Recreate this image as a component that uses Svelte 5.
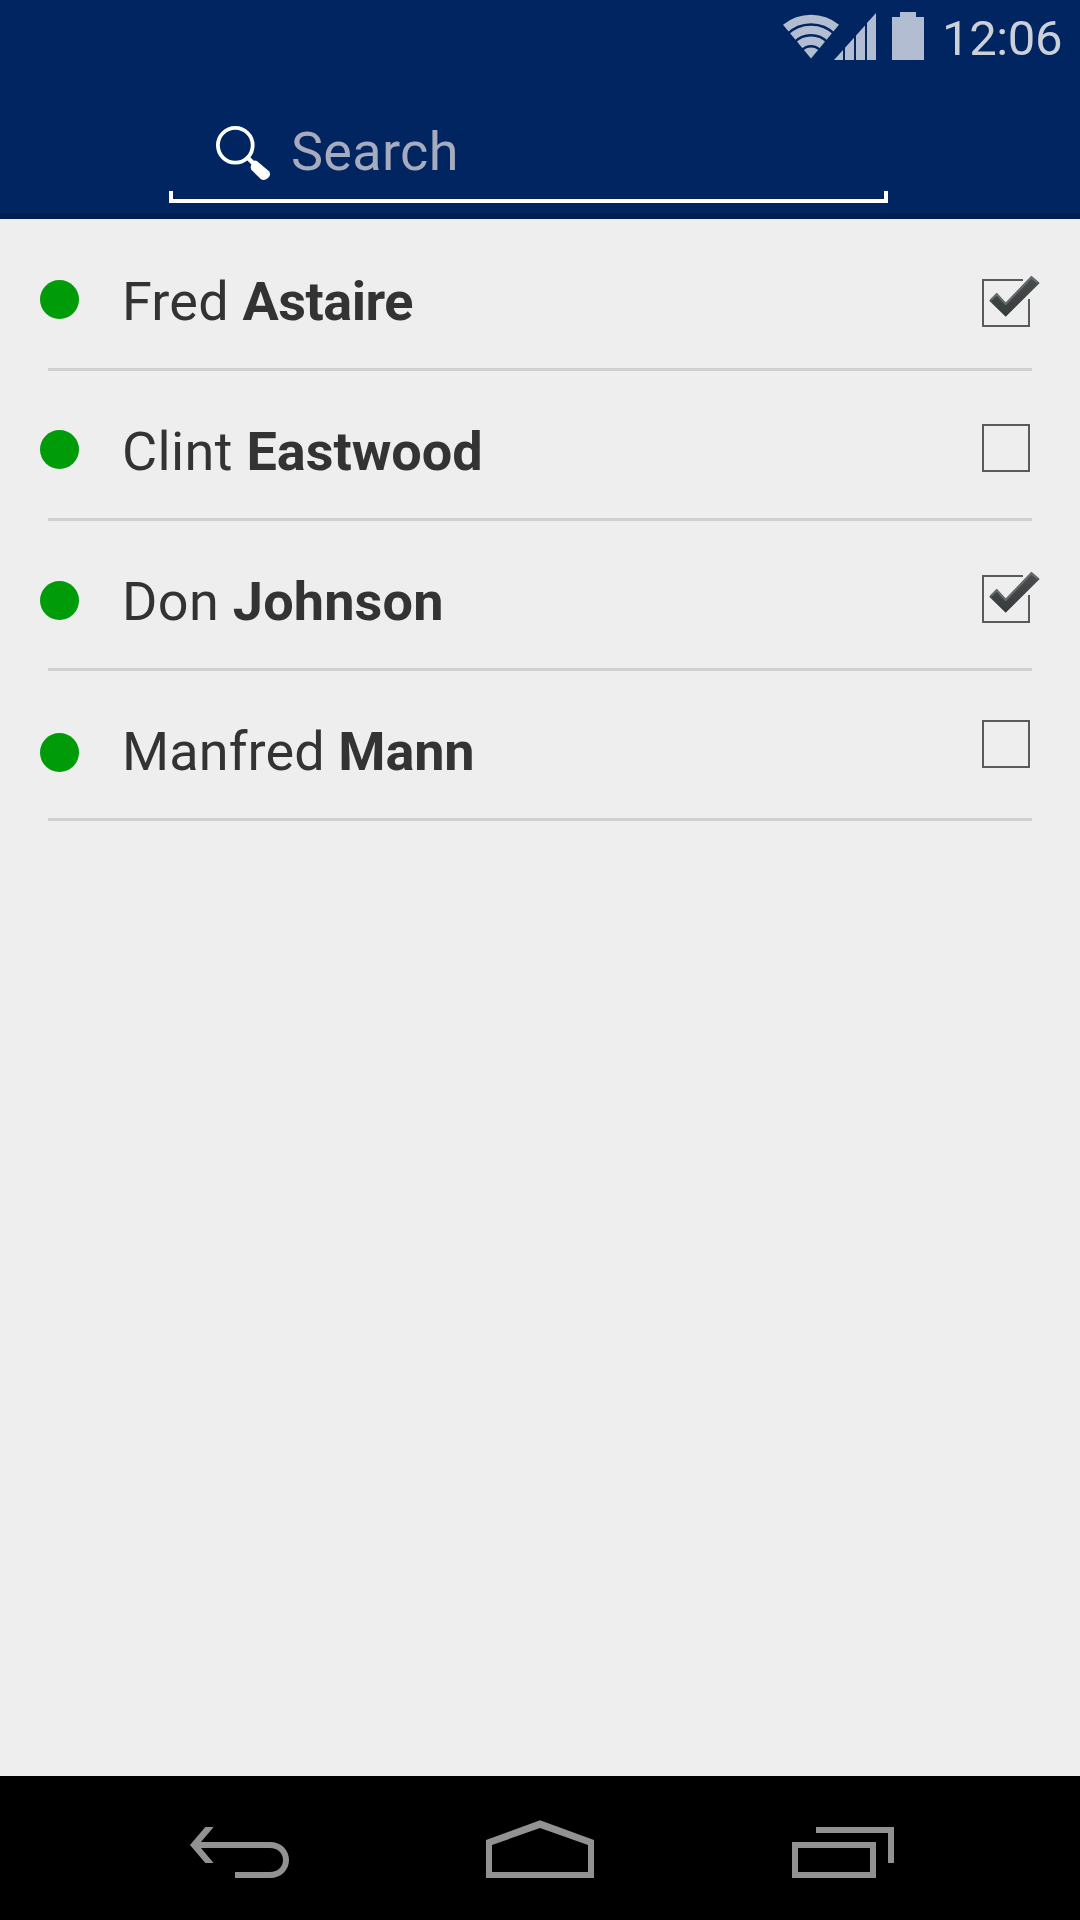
<script>
  // Offsets place each row's dot and checkbox from the top of the row;
  // the track values fine-tune the letter spacing of each half of the name.
  let contacts = $state([
    { first: 'Fred', last: 'Astaire', checked: true, dot: 59, box: 58, track: 0.2, trackBold: -0.5 },
    { first: 'Clint', last: 'Eastwood', checked: false, dot: 59, box: 53, track: 0.35, trackBold: 0 },
    { first: 'Don', last: 'Johnson', checked: true, dot: 60, box: 54, track: 0.35, trackBold: 0.15 },
    { first: 'Manfred', last: 'Mann', checked: false, dot: 62, box: 49, track: 0.1, trackBold: -0.1 }
  ]);
</script>

<div class="screen">
  <header>
    <div class="status">
      <svg class="wifi" width="56" height="60" viewBox="783 0 56 60">
        <path fill="#b2bdd1" d="M811 58.5 L783 24.8 A44 44 0 0 1 839 24.8 Z" />
        <g fill="none" stroke="#002560" stroke-width="2.5">
          <circle cx="811" cy="58.5" r="34" />
          <circle cx="811" cy="58.5" r="23.3" />
          <circle cx="811" cy="58.5" r="12.3" />
        </g>
      </svg>
      <svg class="signal" width="42" height="60" viewBox="834 0 42 60">
        <path fill="#b2bdd1" d="M834 60 L843 50 V60Z M845 47.7 L854 37.7 V60 H845Z M856 35.4 L865 25.4 V60 H856Z M867 23 L876 13 V60 H867Z" />
      </svg>
      <svg class="battery" width="32" height="60" viewBox="0 0 32 60">
        <path fill="#b2bdd1" d="M8 12 H24 V17 H32 V60 H0 V17 H8Z" />
      </svg>
      <span class="clock">12:06</span>
    </div>
    <div class="search">
      <svg class="lens" width="56" height="56" viewBox="0 0 56 56">
        <circle cx="19.3" cy="19.3" r="17.4" fill="none" stroke="#fff" stroke-width="3.8" />
        <path d="M30.5 30.5 L38 38" stroke="#fff" stroke-width="4.5" />
        <path fill="#fff" d="M37.3 35 Q39.5 34 41.5 35.5 L53 45.3 Q55.5 49 52 52 Q48.5 55 45 53.2 L35.5 44 Q34.3 42 35 39.5Z" />
      </svg>
      <span class="hint">Search</span>
      <div class="underline"></div>
    </div>
  </header>

  <main>
    {#each contacts as c}
      <div class="row">
        <span class="dot" style="margin-top: {c.dot}px"></span>
        <span class="name" style="letter-spacing: {c.track}px">{c.first} <b style="letter-spacing: {c.trackBold}px">{c.last}</b></span>
        <svg
          class="check"
          style="margin-top: {c.box}px"
          width="48"
          height="48"
          viewBox="0 0 48 48"
          role="checkbox"
          aria-checked={c.checked}
          aria-label={c.last}
          tabindex="-1"
        >
          {#if c.checked}
            <defs>
              <linearGradient id="ink" x1="0" y1="0" x2="0" y2="1">
                <stop offset="0" stop-color="#4b4e4f" />
                <stop offset="1" stop-color="#363b3c" />
              </linearGradient>
            </defs>
            <path d="M41 1 H1 V47 H47 V20" fill="none" stroke="#5a5a5a" stroke-width="2" />
            <path fill="url(#ink)" d="M7.3 21.7 L14.7 14 L23.7 23.8 L49.3 -3 L57.7 4 L23.7 37.7Z" />
            <path
              d="M8.6 21.3 L14.7 15.3 L23.7 25 L49.5 -1.7 L56.3 4"
              fill="none"
              stroke="#686b6c"
              stroke-width="2.2"
            />
          {:else}
            <rect x="1" y="1" width="46" height="46" fill="none" stroke="#5a5a5a" stroke-width="2" />
          {/if}
        </svg>
        <div class="line"></div>
      </div>
    {/each}
  </main>

  <nav>
    <svg width="140" height="144" viewBox="0 48 420 432">
      <path d="M60 255 L106 201 H131 L93 246 H300 C334 246 357 270 357 300 S334 354 300 354 H195 V336 H300 C324 336 339 320 339 300 S324 264 300 264 H93 L131 309 H106Z" />
    </svg>
    <svg width="140" height="144" viewBox="0 48 420 432">
      <path fill-rule="evenodd" d="M48 240 L210 181 L372 240 V354 H48Z M66 255 V336 H354 V255 L210 204Z" />
    </svg>
    <svg width="140" height="144" viewBox="0 48 420 432">
      <path fill-rule="evenodd" d="M138 201 H372 V309 H354 V219 H138Z M66 246 H318 V354 H66Z M84 264 V336 H300 V264Z" />
    </svg>
  </nav>
</div>

<style>
  :global(body) {
    margin: 0;
    background: #eee;
  }
  .screen {
    width: 1080px;
    height: 1920px;
    display: flex;
    flex-direction: column;
    overflow: hidden;
    background: #eee;
    font-family: Roboto, sans-serif;
  }
  svg {
    display: block;
    flex: none;
  }
  header {
    box-sizing: border-box;
    height: 219px;
    flex: none;
    background: #002560;
    border-bottom: 6px solid #001f4f;
  }
  .status {
    height: 75px;
    display: flex;
    padding-left: 783px;
  }
  .signal {
    margin-left: -5px;
  }
  .battery {
    margin-left: 16px;
  }
  .clock {
    margin-left: 18px;
    font-size: 49px;
    line-height: 77px;
    letter-spacing: -0.4px;
    color: #ccd0d8;
    white-space: nowrap;
  }
  .search {
    box-sizing: border-box;
    width: 719px;
    height: 128px;
    margin-left: 169px;
    display: grid;
    grid-template-columns: 75px 1fr;
    grid-template-rows: 116px 12px;
  }
  .lens {
    margin: 51px 0 0 47px;
  }
  .hint {
    padding-left: 47px;
    padding-top: 45px;
    font-size: 54px;
    line-height: 64px;
    letter-spacing: 0.3px;
    color: #a6abbd;
  }
  .underline {
    grid-column: 1 / 3;
    border: 4px solid #fff;
    border-top: 0;
  }
  main {
    flex: 1;
    padding-top: 2px;
  }
  .row {
    height: 150px;
    display: grid;
    grid-template-columns: 40px 82px 1fr 98px;
    grid-template-rows: 147px 3px;
    align-items: start;
  }
  .dot {
    grid-column: 1;
    width: 39px;
    height: 39px;
    margin-left: 40px;
    border-radius: 50%;
    background: #009b08;
  }
  .name {
    grid-column: 3;
    padding-top: 49px;
    font-size: 54px;
    line-height: 64px;
    color: #333;
    white-space: nowrap;
  }
  .check {
    grid-column: 4;
    overflow: visible;
    outline: none;
  }
  .line {
    grid-column: 1 / 5;
    height: 3px;
    margin: 0 48px;
    background: #d0d0d0;
  }
  nav {
    height: 144px;
    flex: none;
    display: flex;
    gap: 160px;
    padding-left: 170px;
    background: #000;
    fill: #929292;
  }
</style>
